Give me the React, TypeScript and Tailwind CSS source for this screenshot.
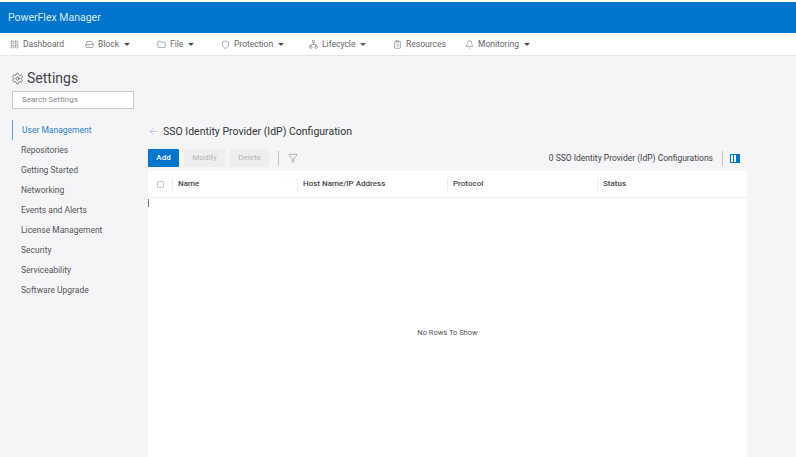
import React from 'react';
import { Settings, ArrowLeft, Filter, Folder, Shield, Bell, LayoutGrid, HardDrive, Network, ClipboardList } from 'lucide-react';

const Caret = () => (
  <span className="ml-[5px] inline-block w-0 h-0 border-l-[3px] border-r-[3px] border-t-[3px] border-l-transparent border-r-transparent border-t-[#555]"></span>
);

const navItems = [
  { label: 'Dashboard', icon: LayoutGrid, width: 'w-[75px]', caret: false },
  { label: 'Block', icon: HardDrive, width: 'w-[72px]', caret: true },
  { label: 'File', icon: Folder, width: 'w-[64px]', caret: true },
  { label: 'Protection', icon: Shield, width: 'w-[88px]', caret: true },
  { label: 'Lifecycle', icon: Network, width: 'w-[84px]', caret: true },
  { label: 'Resources', icon: ClipboardList, width: 'w-[72px]', caret: false },
  { label: 'Monitoring', icon: Bell, width: 'w-[80px]', caret: true },
];

const sideItems = ['Repositories', 'Getting Started', 'Networking', 'Events and Alerts', 'License Management', 'Security', 'Serviceability', 'Software Upgrade'];

const columns = [
  { label: 'Name', width: 'w-[125px]' },
  { label: 'Host Name/IP Address', width: 'w-[150px]' },
  { label: 'Protocol', width: 'w-[150px]' },
  { label: 'Status', width: 'flex-1' },
];

export default function App() {
  return (
    <div className="w-[796px] h-[457px] overflow-hidden flex flex-col bg-[#f5f5f8] text-[#444] font-['Roboto',sans-serif]">
      <div className="h-[33px] shrink-0 bg-[#0076ce] border-t-2 border-white flex items-center pl-[8px] text-[10.5px] text-[#d9ecfa]">
        PowerFlex Manager
      </div>
      <nav className="h-[23px] shrink-0 bg-white border-b border-[#e6e6e6] flex items-center pl-[10px] text-[8.5px] text-[#666]">
        {navItems.map(({ label, icon: Icon, width, caret }) => (
          <div key={label} className={`flex items-center ${width}`}>
            <Icon size={9} strokeWidth={1.25} className="mr-[4px] text-[#555]" />
            <span>{label}</span>
            {caret && <Caret />}
          </div>
        ))}
      </nav>
      <div className="flex flex-1 min-h-0">
        <aside className="w-[148px] shrink-0 pl-[12px] pt-[13px]">
          <div className="flex items-center h-[18px] ml-[-1px] text-[14px] text-[#444]">
            <Settings size={13} strokeWidth={1.25} className="mr-[3px]" />
            <span>Settings</span>
          </div>
          <div className="mt-[4px] w-[122px] h-[18px] bg-white border border-[#c9c9c9] flex items-center pl-[9px] text-[8px] text-[#888]">
            Search Settings
          </div>
          <ul className="mt-[11px] text-[8.5px] text-[#555]">
            <li className="h-[20px] flex items-center pl-[9px] border-l border-[#5a9fd4] text-[#2f80c8]">User Management</li>
            {sideItems.map((item) => (
              <li key={item} className="h-[20px] flex items-center pl-[9px]">{item}</li>
            ))}
          </ul>
        </aside>
        <main className="w-[599px] shrink-0 flex flex-col">
          <div className="h-[19px] mt-[66px] flex items-center text-[#333]">
            <ArrowLeft size={11} strokeWidth={1.25} className="text-[#9aa6e0] mr-[4px]" />
            <span className="text-[10.5px]">SSO Identity Provider (IdP) Configuration</span>
          </div>
          <div className="h-[18px] mt-[8px] flex items-center text-[8px]">
            <button className="w-[31px] h-[18px] bg-[#0076ce] text-white rounded-[1px] font-medium">Add</button>
            <button className="w-[41px] h-[18px] ml-[5px] bg-[#eeeeef] text-[#b5b5b5]">Modify</button>
            <button className="w-[39px] h-[18px] ml-[5px] bg-[#eeeeef] text-[#b5b5b5]">Delete</button>
            <span className="w-px h-[15px] ml-[9px] bg-[#c4c4c4]"></span>
            <Filter size={10} strokeWidth={1} className="ml-[9px] text-[#555]" />
            <span className="ml-auto text-[8.5px] text-[#444]">0 SSO Identity Provider (IdP) Configurations</span>
            <span className="w-px h-[15px] ml-[9px] bg-[#c4c4c4]"></span>
            <svg width="10" height="9" viewBox="0 0 10 9" className="ml-[7px] mr-[7px]">
              <rect x="0.5" y="0.5" width="9" height="8" fill="none" stroke="#0076ce" />
              <rect x="3" y="0.5" width="1" height="8" fill="#0076ce" />
              <rect x="6" y="0.5" width="3.5" height="8" fill="#0076ce" />
            </svg>
          </div>
          <div className="mt-[4px] flex-1 bg-white flex flex-col relative">
            <div className="h-[27px] shrink-0 flex items-center border-b border-[#ececec] text-[8px] font-medium text-[#444]">
              <div className="w-[24px] flex justify-center">
                <span className="w-[7px] h-[7px] border border-[#c8c8c8] rounded-[1px]"></span>
              </div>
              {columns.map((col) => (
                <div key={col.label} className={`${col.width} h-[13px] flex items-center pl-[5px] border-l border-[#ececec]`}>
                  {col.label}
                </div>
              ))}
            </div>
            <span className="absolute left-0 top-[28px] w-px h-[8px] bg-[#777]"></span>
            <div className="flex-1 flex justify-center pt-[129px] text-[7.5px] text-[#555]">No Rows To Show</div>
          </div>
        </main>
      </div>
    </div>
  );
}
